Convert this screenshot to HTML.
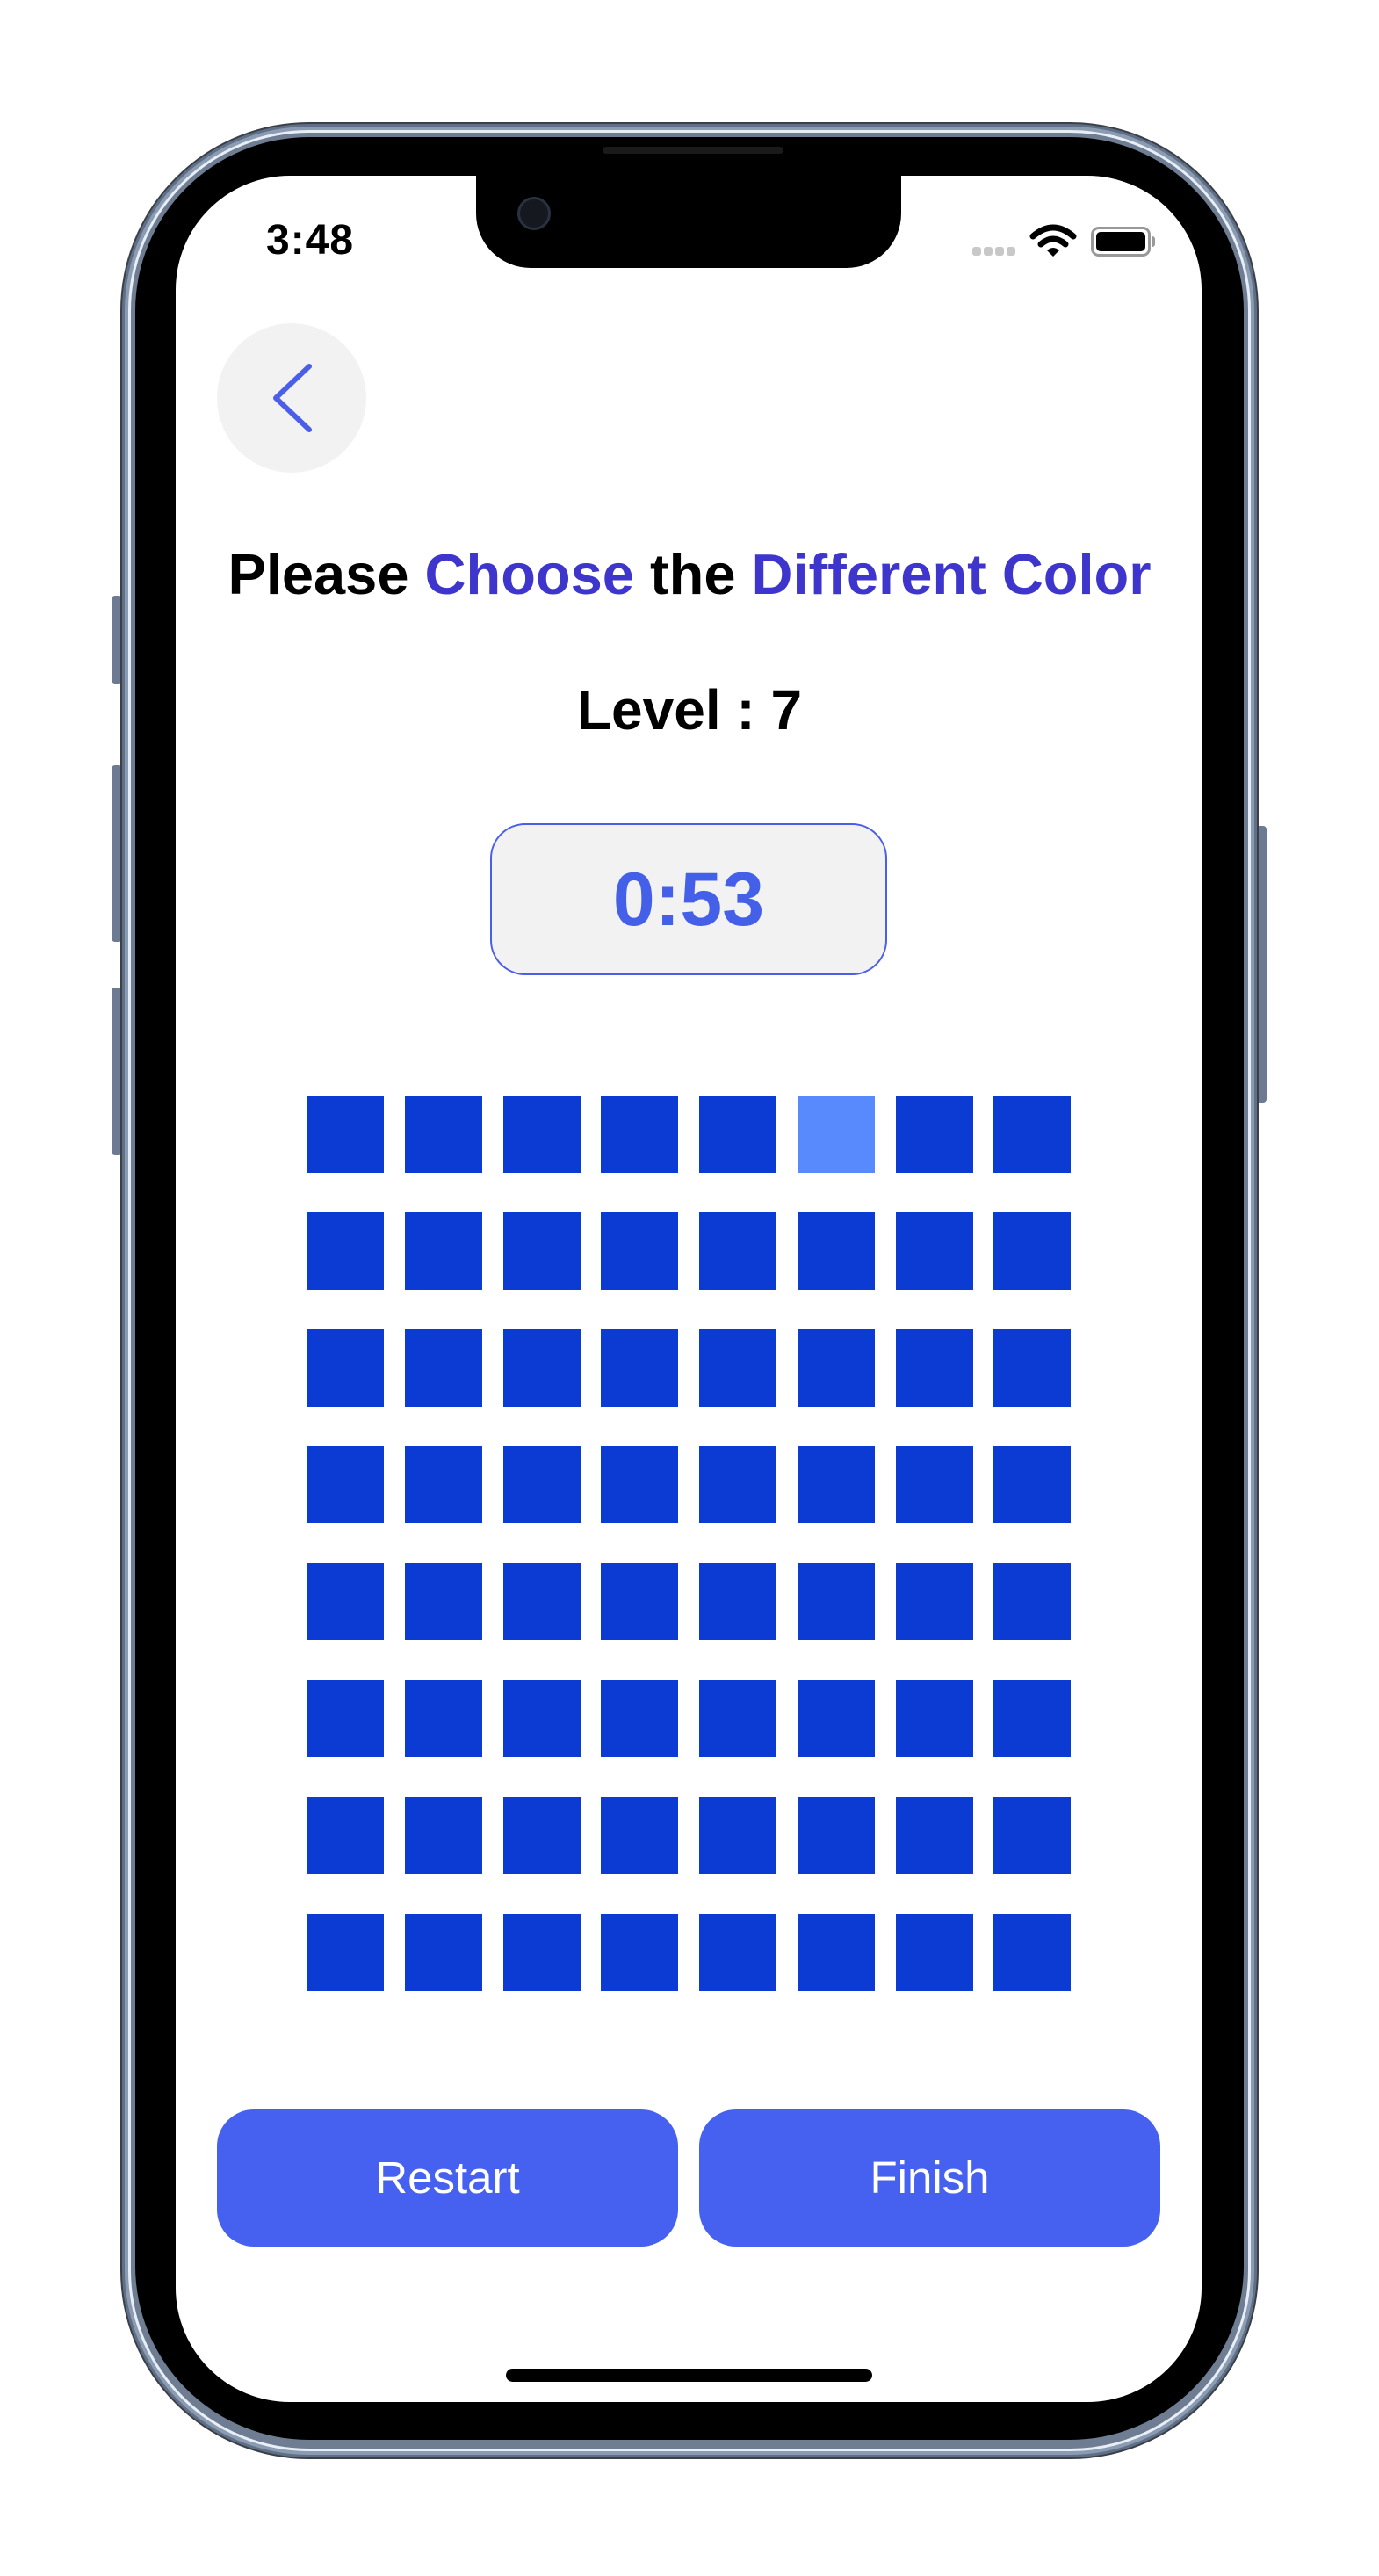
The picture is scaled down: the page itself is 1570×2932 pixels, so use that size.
<!DOCTYPE html>
<html><head><meta charset="utf-8"><style>
*{margin:0;padding:0;box-sizing:border-box}
body{width:1570px;height:2932px;background:#fff;position:relative;overflow:hidden;font-family:"Liberation Sans",sans-serif}
.abs{position:absolute}
.frame{left:137px;top:139px;width:1296px;height:2660px;border-radius:215px;background:#5f6f86;border:2px solid #3a3f48}
.frame2{left:142px;top:144px;width:1286px;height:2650px;border-radius:210px;background:#8a9bb2}
.frame3{left:146px;top:148px;width:1278px;height:2642px;border-radius:206px;border:3px solid #e8eef6;background:#6f7d92}
.bezel{left:154px;top:156px;width:1262px;height:2621px;border-radius:198px;background:#000}
.screen{left:200px;top:200px;width:1168px;height:2534px;border-radius:130px;background:#fff;overflow:hidden}
.btn{background:#6d7b92;border-radius:4px}
.sq{position:absolute;width:88px;height:88px;background:#0b3bd3}
.b{position:absolute;top:2401px;height:156px;width:525px;border-radius:42px;background:#4661ef;color:#fff;font-size:51px;text-align:center;line-height:156px}
</style></head><body>
<div class="abs btn" style="left:127px;top:678px;width:12px;height:100px"></div>
<div class="abs btn" style="left:127px;top:871px;width:12px;height:201px"></div>
<div class="abs btn" style="left:127px;top:1124px;width:12px;height:191px"></div>
<div class="abs btn" style="left:1430px;top:940px;width:12px;height:315px"></div>
<div class="abs frame"></div>
<div class="abs frame2"></div>
<div class="abs frame3"></div>
<div class="abs bezel"></div>
<div class="abs" style="left:686px;top:167px;width:206px;height:8px;border-radius:4px;background:#1a1a1a"></div>
<div class="abs screen"></div>
<!-- notch -->
<div class="abs" style="left:542px;top:196px;width:484px;height:109px;background:#000;border-radius:0 0 62px 62px"></div>
<div class="abs" style="left:589px;top:224px;width:38px;height:38px;border-radius:50%;background:#15181e;border:3px solid #2a3140"></div>
<!-- status -->
<div class="abs" style="left:303px;top:246px;font-size:48px;font-weight:bold;color:#000;letter-spacing:1px">3:48</div>
<div class="abs" style="left:1107px;top:281px;width:52px;height:11px;display:flex;gap:3px">
<i style="width:10px;height:10px;border-radius:3px;background:#c8c8c8"></i><i style="width:10px;height:10px;border-radius:3px;background:#c8c8c8"></i><i style="width:10px;height:10px;border-radius:3px;background:#c8c8c8"></i><i style="width:10px;height:10px;border-radius:3px;background:#c8c8c8"></i></div>
<svg class="abs" style="left:1172px;top:255px" width="54" height="40" viewBox="0 0 54 40"><path d="M4 14 Q27 -6 50 14" stroke="#000" stroke-width="7" fill="none" stroke-linecap="round"/><path d="M13 23 Q27 11 41 23" stroke="#000" stroke-width="7" fill="none" stroke-linecap="round"/><path d="M20 30 L27 37 L34 30 Q27 24 20 30Z" fill="#000"/></svg>
<div class="abs" style="left:1242px;top:258px;width:68px;height:34px;border:3px solid #999;border-radius:9px;padding:3px"><div style="width:100%;height:100%;background:#000;border-radius:5px"></div></div>
<div class="abs" style="left:1311px;top:269px;width:4px;height:12px;background:#999;border-radius:0 3px 3px 0"></div>
<!-- back -->
<div class="abs" style="left:247px;top:368px;width:170px;height:170px;border-radius:50%;background:#f2f2f2"></div>
<svg class="abs" style="left:300px;top:405px" width="70" height="100" viewBox="0 0 70 100"><path d="M52 12 L14 48 L52 84" stroke="#4a5ee8" stroke-width="6" fill="none" stroke-linecap="round" stroke-linejoin="round"/></svg>
<!-- title -->
<div class="abs" style="left:0;width:1570px;top:616px;text-align:center;font-size:65px;font-weight:bold;color:#000;letter-spacing:0px">Please <span style="color:#3d35cc">Choose</span> the <span style="color:#3d35cc">Different Color</span></div>
<div class="abs" style="left:0;width:1570px;top:771px;text-align:center;font-size:64px;font-weight:bold;color:#000">Level : 7</div>
<div class="abs" style="left:558px;top:937px;width:452px;height:173px;border:2.5px solid #4a5ee8;border-radius:40px;background:#f2f2f2;text-align:center;line-height:170px;font-size:86px;font-weight:bold;color:#4560e8">0:53</div>
<!-- grid -->
<div id="g"></div>
<script>
var xs=[349,461,573,684,796,908,1020,1131],h='';
for(var r=0;r<8;r++)for(var c=0;c<8;c++){var y=1247+r*133;h+='<div class="sq" style="left:'+xs[c]+'px;top:'+y+'px'+(r==0&&c==5?';background:#5889fd':'')+'"></div>';}
document.getElementById('g').innerHTML=h;
</script>
<div class="b" style="left:247px">Restart</div>
<div class="b" style="left:796px">Finish</div>
<div class="abs" style="left:576px;top:2696px;width:417px;height:15px;border-radius:8px;background:#000"></div>
</body></html>
